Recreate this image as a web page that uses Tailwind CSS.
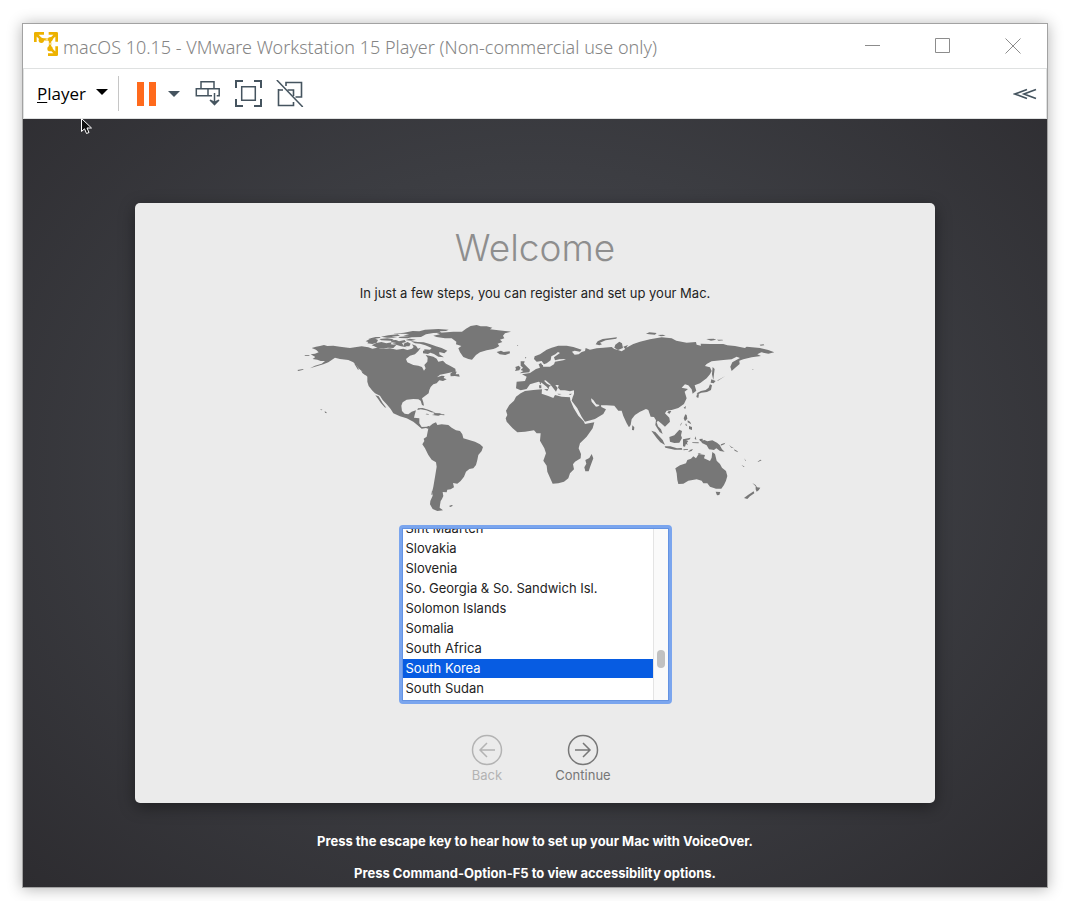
<!DOCTYPE html>
<html lang="en">
<head>
<meta charset="utf-8">
<meta name="viewport" content="width=device-width, initial-scale=1">
<title>macOS 10.15 - VMware Workstation 15 Player</title>
<script src="https://cdn.jsdelivr.net/npm/@tailwindcss/browser@4"></script>
</head>
<body class="bg-white">
<div class="flex min-h-screen pt-[23px] pr-[17px] pb-[13px] pl-[22px]">
<div class="relative flex flex-1 flex-col border border-[#a2a2a2] bg-white shadow-[0_1px_14px_rgba(0,0,0,0.3)]">
  <header class="flex h-11 items-center pr-[26px] pl-[11px]">
    <svg class="-mt-1 size-6 shrink-0" viewBox="0 0 72 72" aria-hidden="true">
      <g fill="none" stroke="#edb200" stroke-width="8" stroke-linejoin="round">
        <path d="M4 30V4h26M6 6l16 16M44 4h24v25M66 6L50 22M68 43v25H42M66 66L50 50"/>
        <path d="M24 22h24v26" stroke-width="7"/>
      </g>
      <circle cx="22" cy="25" r="8" fill="#edb200"/><circle cx="49" cy="22" r="7" fill="#edb200"/><circle cx="48" cy="50" r="8" fill="#edb200"/>
      <path d="M35 22h7M49 32v6" stroke="#f8dd88" stroke-width="7"/>
    </svg>
    <h1 class="ml-[5px] flex-1 truncate pt-[2px] font-['Noto_Sans',sans-serif] text-[18px] font-light text-[#858585]">macOS 10.15 - VMware Workstation 15 Player (Non-commercial use only)</h1>
    <div class="flex items-center gap-[54px] text-[#8c8c8c]">
      <button aria-label="Minimize"><svg class="block size-4" viewBox="0 0 16 16" fill="none" stroke="currentColor"><path d="M0 7.500h15"/></svg></button>
      <button aria-label="Maximize"><svg class="block size-4" viewBox="0 0 16 16" fill="none" stroke="currentColor"><path d="M.5.5h14v14H.5z"/></svg></button>
      <button aria-label="Close"><svg class="block size-4" viewBox="0 0 16 16" fill="none" stroke="currentColor"><path d="M.5.5l15 15M15.500.5l-15 15"/></svg></button>
    </div>
  </header>

  <nav class="flex h-[51px] items-center border border-[#dfe1e1] pr-[9px] pl-[13px] text-[#45545f]" aria-label="Virtual machine">
    <button class="flex items-center gap-[9px] font-['Open_Sans',sans-serif] text-[17px] leading-6 font-normal text-black"><span class="w-[50px] text-left"><span class="underline underline-offset-2">P</span>layer</span>
      <svg class="-mt-1 h-[6px] w-3" viewBox="0 0 12 6"><path d="M0 0h12L6 6z"/></svg></button>
    <span class="ml-[10px] h-[35px] w-px bg-[#c6c6c6]"></span>
    <button class="ml-[18px]" aria-label="Pause"><svg class="block h-6 w-[19px]" viewBox="0 0 19 24" fill="#ff6a1c"><path d="M0 0h7v24H0zM12 0h7v24h-7z"/></svg></button>
    <button class="ml-3" aria-label="Power options"><svg class="block h-[6px] w-3" viewBox="0 0 12 6" fill="currentColor"><path d="M0 0h12L6 6z"/></svg></button>
    <button class="ml-[15px]" aria-label="Send Ctrl+Alt+Del"><svg class="block h-[27px] w-[26px]" viewBox="0 0 26 27" fill="none" stroke="currentColor" stroke-width="1.500"><path d="M6 8.500V1.800h13v6.700M12.800 15.700H1.300V8.700h22.900v7h-2.500M13 8.700v7H17M19.500 13v11M15 20l4.500 4.500L24 20" /><path d="M15.500 19.500l4 6 4-6-4 2z" fill="currentColor" stroke="none"/></svg></button>
    <button class="ml-[14px]" aria-label="Full screen"><svg class="block size-[27px]" viewBox="0 0 27 27" fill="none" stroke="currentColor" stroke-width="2"><path d="M1 8V1h7M19 1h7v7M26 19v7h-7M8 26H1v-7"/><path d="M6.700 6.700h13.600v13.600H6.700z" stroke-width="1.500"/></svg></button>
    <button class="ml-[14px]" aria-label="Unity mode"><svg class="block h-[27px] w-7" viewBox="0 0 28 27" fill="none" stroke="currentColor" stroke-width="1.600"><path d="M10 6V2.500h15.500v14.500h-6M2.500 9v16.500H17.500V22M7 10H2.500M11.500 10h6v6"/><path d="M.8 0l26 27" stroke-width="1.500"/></svg></button>
    <button class="ml-auto" aria-label="Collapse toolbar"><svg class="block h-3 w-6" viewBox="0 0 24 12" fill="none" stroke="currentColor" stroke-width="1.700"><path d="M14 1.500L2 6l12 4.500M23 1.500L11 6l12 4.500"/></svg></button>
  </nav>

  <main class="flex flex-1 flex-col items-center bg-[radial-gradient(ellipse_at_50%_45%,#4b4b54_0%,#3c3d42_50%,#2d2c30_100%)] px-6 pt-[84px] font-[Inter,sans-serif] text-[13px] leading-5">
    <section class="flex h-[600px] w-full max-w-[800px] flex-col items-center rounded-[5px] bg-[#ebebeb] pt-5 shadow-[0_4px_16px_rgba(0,0,0,0.4)]">
      <h2 class="text-[37px] leading-[50px] font-light text-[#8e8e8e]">Welcome</h2>
      <p class="mt-[10px] text-[#232323]">In just a few steps, you can register and set up your Mac.</p>
      <svg class="mt-[17px] h-[195px] w-[490px] shrink-0" viewBox="290 320 490 195" fill="#777" role="img" aria-label="World map">
        <!-- North America and Arctic islands -->
        <g transform="translate(290 315) scale(.3333)">
          <path d="M78 95L90 93 102 90 112 93 130 92 150 95 180 99 200 96 215 94 235 97 247 101 262 98 280 102 300 100 320 104 340 101 352 105 366 101 371 96 366 88 378 92 384 101 392 98 385 108 375 118 360 122 348 132 352 142 370 150 385 152 396 156 402 167 407 160 403 150 412 140 413 128 407 120 418 122 430 125 440 131 445 140 459 137 468 146 480 152 496 161 497 168 485 172 465 176 450 179 441 187 455 182 464 183 461 189 470 193 459 198 448 196 440 205 430 208 422 216 418 225 416 235 405 243 396 250 400 262 402 272 396 270 392 257 385 253 370 252 350 254 338 262 334 272 336 288 344 296 355 298 365 290 378 286 374 300 372 308 388 310 388 325 395 336 410 335 418 332 416 342 408 339 395 341 382 330 370 320 350 310 330 304 310 295 302 282 290 268 278 255 270 242 255 235 246 226 236 213 232 200 232 185 222 174 208 162 200 152 190 142 175 135 150 132 135 128 125 135 115 142 100 148 85 152 60 160 75 152 95 146 105 138 92 138 82 134 68 132 76 126 62 118 75 116 86 112 78 104 65 99z"/>
          <path d="M256 241L266 244 278 264 289 278 284 277 272 263 264 251zM193 146l4 0 10 17-3 1zM214 168l10 4 8 9-6 0-9-7zM22 165l18-3 0 2-15 4zM43 121l13-1 4 2-14 1zM92 283l5 1-1 2-5-2zM104 289l6 3-1 3-4-2z"/>
          <path d="M227 79l12-7 17-1 8 4-4 8-13 4-15-2 3-4zM245 91l14-7 15-3 15 4 17-3-4 6 17 2-9 9-17-1-12 3-18-2-10-5zM235 71l22-5 15 0-3 3-19 3zM273 65l22-4 28-3 7 4-25 3 17 3-31 0zM268 72l24-2 19 3-9 4-28-1zM302 76l16-1 9 4 17-4 4 6-12 3 4 7 10 6-17-3-12-4-14-4 12-2-14-2zM341 86l12-5 9 5-4 8-15 0zM347 75l12-4 19 3-14 3-14-1zM325 66l24-2 17 2-13 4-24-1z"/>
          <path d="M306 57l36-4 26-5 20 1 17-5 40-2 31 2-8 4-19 1 6 4-25 1-22 4-15 8-25 1-19-1 8-3-17-1 18-5-25-1z"/>
          <path d="M367 79l16 2 18 1 18 5 19 7 17 5 17 8-9 8-15-4 0 7 14 9-17-2-13-8-15-5-14-2 0-7 17 1 5-5-19-8-16-5-15-1-12-6zM399 107l18-3 8 7-11 6-15-2zM481 176l11-9 8 3-3 8 10 0 2 7-14-2-13 1z"/>
          <path d="M384 280l14-1 17 5 22 9-13-1-15-6-17-3-10 2zM430 294l19 1 8 3-12 4-19-2 8-2zM409 296l7 1 0 2-9-1zM455 298l8 0 0 3-8-1z"/>
        </g>
        <!-- South America -->
        <g transform="translate(380 395) scale(.3333)">
          <path d="M146 96L158 86 168 82 172 90 185 88 205 90 215 98 228 106 240 108 247 118 250 130 265 134 285 140 300 148 309 156 305 168 295 180 292 195 288 210 280 220 268 222 258 230 252 245 242 258 232 266 219 264 222 277 212 283 202 284 200 292 188 291 190 303 186 312 182 318 180 330 179 338 189 346 172 348 158 342 150 328 151 318 158 302 157 288 160 275 166 240 170 215 168 202 155 194 145 180 135 160 127 148 133 138 131 131 140 125 143 110z"/>
          <path d="M207 333l8-3 4 2-8 4zM156 287l3 2-2 10-3 0z"/>
        </g>
        <!-- Greenland, Iceland, Britain, Europe and Asia -->
        <g transform="translate(430 315) scale(.3333)">
          <path d="M96 50L108 41 122 33 140 30 152 34 170 34 187 38 180 43 205 46 225 48 243 50 225 55 219 62 223 70 210 74 217 81 203 86 208 93 198 99 190 102 170 106 150 112 138 120 126 134 115 132 100 126 90 112 85 100 94 93 78 88 79 80 65 70 45 70 20 66 10 62 30 58 20 54 50 52 70 50z"/>
          <path d="M200 111l13-4 8 4 18-2 1 6-14 5-17-2z"/>
          <path d="M272 139l12 0-2 7 9 9 9 9-2 8-29 3 11-7-8-3 7-7-7-6zM256 156l10-4 6 6-4 8-13 2 3-6zM285 126l4 1-2 4zM261 90l4 1-3 2z"/>
          <path d="M350 104L365 98 385 92 410 92 430 96 455 104 450 110 434 107 426 110 434 119 446 118 455 111 465 108 467 99 480 104 500 100 520 98 545 96 553 102 564 105 575 109 586 102 580 95 594 90 589 98 610 87 630 80 660 73 695 67 725 70 739 77 770 83 798 81 800 89 813 92 812 86 840 87 880 87 892 91 915 93 945 99 950 95 990 99 1015 105 1033 112 1015 116 994 112 982 118 993 123 965 127 940 133 928 137 929 147 915 159 905 168 901 155 907 142 930 129 920 125 905 133 880 135 845 139 830 147 825 153 840 157 845 168 840 178 830 190 810 205 794 211 799 227 788 236 785 223 775 211 765 208 755 218 774 222 764 230 770 250 762 267 745 279 725 285 710 287 705 295 718 308 720 320 705 335 695 326 684 317 680 322 684 334 693 343 698 357 689 351 681 338 676 330 678 316 672 306 662 305 655 285 648 282 630 290 615 300 605 313 602 330 597 337 590 325 580 303 575 287 565 287 553 272 530 271 513 271 499 268 490 255 483 250 485 260 498 275 505 274 512 267 514 276 528 283 520 297 495 312 465 320 455 305 442 280 425 257 428 247 432 237 432 226 420 229 405 226 391 226 384 218 386 210 376 210 383 219 378 230 369 218 360 207 347 196 342 197 351 206 363 212 357 215 356 223 350 215 335 203 326 200 315 203 300 208 290 222 272 226 258 220 260 200 285 198 290 185 276 178 300 174 318 162 330 158 326 148 333 144 340 155 360 155 372 148 375 140 400 136 408 132 388 133 375 136 372 127 390 114 384 111 376 118 364 124 362 136 350 145 342 148 335 138 320 140 312 132 314 124 330 118z"/>
          <path d="M497 88l6-9 15-7 43-5-2 4-32 5-17 7 6 5-8 3zM556 89l12-9 8 5 3 14-15 6-11-7zM648 56l10-4 22 2-5 5-17-1zM683 60l16-1 8 3-14 2zM829 72l22-1 8 3-16 3zM861 74l16 0 3 2-14 1zM989 89l12-1 2 3-11 1z"/>
          <path d="M329 200l3 0 1 7-3 1zM327 211l7 0 0 9-6 0zM342 223l13-1-3 6zM382 236l13 1-8 2zM416 237l10-1-5 4zM331 150l8 0 0 6-8 0z"/>
          <path d="M848 156l6 6-2 16-2 17-4-17zM844 193l13 5-6 7-9-2zM840 208l6 3-3 14-12 6-17 2-10 5-4-3 13-7 14-3 9-7zM801 238l6 0-2 11-6-3zM768 273l-2 9-5-4zM716 288l8 0-5 8-7-3z"/>
          <path d="M862 196l4-2 20-11-22 14zM890 180l7-5zM966 162l6 2-4 0z"/>
        </g>
        <!-- Africa and Madagascar -->
        <g transform="translate(490 380) scale(.3333)">
          <path d="M92 40L105 33 130 30 156 28 155 41 175 48 190 54 195 45 215 50 240 52 241 61 251 84 265 107 281 124 285 132 313 127 308 145 290 170 270 190 266 205 273 222 272 235 255 245 249 253 252 268 240 280 235 295 222 305 205 310 188 311 183 300 172 275 170 257 160 242 168 220 163 205 150 182 152 160 140 160 132 151 105 155 82 157 68 145 50 125 47 115 52 105 48 92 58 75 72 62 78 50z"/>
          <path d="M305 222L310 235 300 262 296 274 286 274 283 262 289 251 286 240 298 234zM427 136l6 6-1 9-6-1z"/>
        </g>
        <!-- Australia and the Pacific islands -->
        <g transform="translate(620 390) scale(.3333)">
          <path d="M166 235L180 226 198 220 202 210 213 206 220 199 228 205 236 192 255 195 252 205 270 213 275 203 277 186 285 192 290 212 300 222 306 233 318 243 322 258 318 272 312 285 304 296 288 296 270 290 262 280 250 280 245 272 230 268 205 272 190 281 175 282 172 270 170 250zM287 305l14 1-3 9-7 1z"/>
          <path d="M397 279l10 6 4 7 10 1-5 8-6 4-3-7 0-9zM401 304l2 6-13 9-8 8-10-3 12-9zM243 153l10-3 9 4 15-3 14 7 8 7 7 13 8 7-14-2-11-8-7 5-15-2-7-12-14-7z"/>
          <path d="M148 141l15-5 15-17 8 4-3 13 3 8-8 14-15 1-13-4zM94 122l12 4 22 24 7 15-14-8-11-13zM134 169l17 0 20 6 14-1 2 5-23 0-28-6zM190 178l14-1 0 2-13 2zM211 179l8-2-4 6-11 3zM189 148l8-2 15-3-4 6-10 1 7 3-4 5 2 8-5-5-3 9-6-1zM224 146l3-7 2 11zM216 157l20 0 0 3-18-1zM238 147l10-1 0 9-8-2zM196 73l4 2 2 11-7 8-4-9zM203 91l7 4 4 8-11-6zM207 108l9 3 0 9-9-3zM187 97l-6 12 1-7zM198 100l4 9-6-4zM303 163l13-5-3 5-11 4zM327 165l8 6 7 4-8-2zM342 178l10 5 2 4-10-5zM364 224l10 6-3 1zM373 205l5 8-2 0zM413 215l8-6 4 2-11 5zM233 189l12 1-8 2z"/>
        </g>
      </svg>

      <div class="mt-[10px] flex h-[179px] w-[273px] shrink-0 rounded-[4px] border-[3px] border-[#7aa5ee]">
        <div class="flex flex-1 border border-[#6493e2] bg-white">
          <div class="flex h-[171px] w-[250px] flex-col justify-end overflow-hidden">
            <select size="9" aria-label="Country or region" class="block h-[181px] w-full shrink-0 appearance-none overflow-hidden border-0 bg-transparent p-0 text-[13px] text-[#232323] outline-none [scrollbar-width:none]">
              <option class="h-5 min-h-5 px-[3px] pt-px pb-0 leading-[19px]">Sint Maarten</option>
              <option class="h-5 min-h-5 px-[3px] pt-px pb-0 leading-[19px]">Slovakia</option>
              <option class="h-5 min-h-5 px-[3px] pt-px pb-0 leading-[19px]">Slovenia</option>
              <option class="h-5 min-h-5 px-[3px] pt-px pb-0 leading-[19px]">So. Georgia &amp; So. Sandwich Isl.</option>
              <option class="h-5 min-h-5 px-[3px] pt-px pb-0 leading-[19px]">Solomon Islands</option>
              <option class="h-5 min-h-5 px-[3px] pt-px pb-0 leading-[19px]">Somalia</option>
              <option class="h-5 min-h-5 px-[3px] pt-px pb-0 leading-[19px]">South Africa</option>
              <option selected class="h-5 min-h-5 border-b border-transparent bg-[#075ce2] bg-clip-padding px-[3px] pt-px pb-0 leading-[19px] text-white checked:bg-[#075ce2] checked:text-white">South Korea</option>
              <option class="h-5 min-h-5 px-[3px] pt-px pb-0 leading-[19px]">South Sudan</option>
            </select>
          </div>
          <div class="flex flex-1 justify-center border-l border-[#e4e4e4] bg-[#fafafa] pt-[121px]"><span class="h-[18px] w-2 rounded-full bg-[#c1c1c1]"></span></div>
        </div>
      </div>

      <div class="mt-[30px] grid grid-cols-2 text-[13px] leading-[18px]">
        <button disabled class="flex w-24 flex-col items-center text-[#b3b3b3]">
          <svg class="size-8" viewBox="0 0 32 32" fill="none" stroke="currentColor" stroke-width="1.500"><circle cx="16" cy="16" r="14.500"/><path d="M24 16H9M16 9l-7 7 7 7"/></svg>Back</button>
        <button class="flex w-24 flex-col items-center text-[#777]">
          <svg class="size-8" viewBox="0 0 32 32" fill="none" stroke="currentColor" stroke-width="1.500"><circle cx="16" cy="16" r="14.500"/><path d="M8 16h15M16 9l7 7-7 7"/></svg>Continue</button>
      </div>
    </section>
    <p class="mt-7 font-bold text-white">Press the escape key to hear how to set up your Mac with VoiceOver.</p>
    <p class="mt-3 font-bold text-white">Press Command-Option-F5 to view accessibility options.</p>
  </main>

  <svg class="absolute top-[94px] left-[58px] h-[17px] w-3" viewBox="0 0 12 17" aria-hidden="true"><path d="M.5.5v13l3-2.700 2 4.700 2.500-1-2-4.500h4.500z" fill="#111" stroke="#fff"/></svg>
</div>
</div>
</body>
</html>
